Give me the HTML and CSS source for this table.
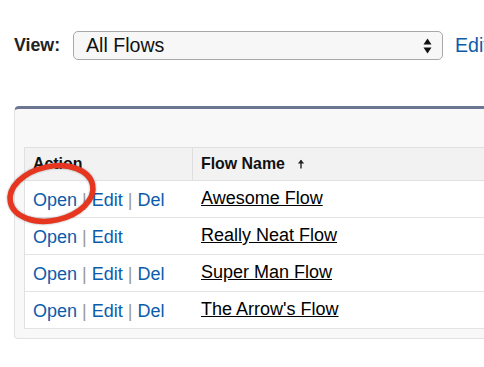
FILE: index.html
```html
<!DOCTYPE html>
<html>
<head>
<meta charset="utf-8">
<link rel="stylesheet" href="styles.css">
</head>
<body>
<div class="viewbar">
  <span class="view-label">View:</span>
  <div class="select">
    <span class="select-text">All Flows</span>
    <svg class="select-arrows" width="9" height="16" viewBox="0 0 9 16"><path d="M4.5 0.5 L8.5 6.5 L0.5 6.5 Z" fill="#111"/><path d="M0.5 9.5 L8.5 9.5 L4.5 15.5 Z" fill="#111"/></svg>
  </div>
  <a class="edit-view">Edit</a>
</div>

<div class="panel">
  <div class="list">
    <div class="row head">
      <div class="cell action-h">Action</div>
      <div class="cell name-h">Flow Name
        <svg class="sort" width="8" height="10" viewBox="0 0 8 10"><path d="M4 1.2 L4 9.5" stroke="#222" stroke-width="1.4"/><path d="M0.8 4.6 L4 0.8 L7.2 4.6 Z" fill="#222"/></svg>
      </div>
    </div>
    <div class="row">
      <div class="cell actions"><a>Open</a> <span class="sep">|</span> <a>Edit</a> <span class="sep">|</span> <a>Del</a></div>
      <div class="cell name"><a>Awesome Flow</a></div>
    </div>
    <div class="row">
      <div class="cell actions"><a>Open</a> <span class="sep">|</span> <a>Edit</a></div>
      <div class="cell name"><a>Really Neat Flow</a></div>
    </div>
    <div class="row">
      <div class="cell actions"><a>Open</a> <span class="sep">|</span> <a>Edit</a> <span class="sep">|</span> <a>Del</a></div>
      <div class="cell name"><a>Super Man Flow</a></div>
    </div>
    <div class="row">
      <div class="cell actions"><a>Open</a> <span class="sep">|</span> <a>Edit</a> <span class="sep">|</span> <a>Del</a></div>
      <div class="cell name"><a>The Arrow's Flow</a></div>
    </div>
  </div>
</div>

<svg class="highlight" width="110" height="90" viewBox="0 0 110 90">
  <ellipse cx="51.5" cy="43.5" rx="42" ry="27" transform="rotate(-12 51.5 43.5)" fill="none" stroke="#e6361f" stroke-width="5.5"/>
</svg>
</body>
</html>
```

FILE: styles.css
```css
html, body {
  margin: 0;
  padding: 0;
  background: #ffffff;
  overflow: hidden;
}
body {
  font-family: "Liberation Sans", Arial, Helvetica, sans-serif;
  color: #000;
  width: 484px;
  height: 367px;
  position: relative;
}
.viewbar {
  display: flex;
  align-items: center;
  margin-top: 31px;
  padding-left: 14px;
  height: 29px;
  white-space: nowrap;
}
.view-label {
  font-weight: bold;
  font-size: 17.8px;
  color: #222;
  width: 59px;
  flex: none;
}
.select {
  box-sizing: border-box;
  width: 370px;
  height: 29px;
  flex: none;
  border: 1px solid #a8a8a8;
  border-radius: 5px;
  background: #f7f7f7;
  display: flex;
  align-items: center;
  padding-left: 12px;
  padding-right: 10px;
}
.select-text {
  font-size: 19.6px;
  flex: 1;
  color: #111;
}
.select-arrows {
  display: block;
}
.edit-view {
  margin-left: 12px;
  font-size: 19.6px;
  color: #0b5cab;
  flex: none;
}
.panel {
  margin-top: 46px;
  margin-left: 14px;
  width: 540px;
  box-sizing: border-box;
  border: 1px solid #e2e2e2;
  border-top: 3px solid #6c7692;
  border-radius: 5px 5px 4px 4px;
  background: #f8f8f8;
  padding: 38px 0 9px 9px;
}
.list {
  border-top: 1px solid #e0e0e0;
  border-left: 1px solid #e0e0e0;
  background: #fff;
}
.row {
  display: grid;
  grid-template-columns: 168px 1fr;
  box-sizing: border-box;
  height: 37px;
  border-bottom: 1px solid #e3e3e3;
}
.row.head {
  height: 33px;
  background: #f2f2f2;
  border-bottom: 1px solid #e0e0e0;
}
.cell {
  display: flex;
  align-items: center;
  padding-left: 8px;
  white-space: nowrap;
}
.action-h, .name-h {
  font-weight: bold;
  font-size: 15.9px;
  color: #111;
}
.action-h {
  border-right: 1px solid #dedede;
}
.sort {
  margin-left: 12px;
}
.actions {
  font-size: 18px;
  padding-top: 3px;
}
.actions a {
  color: #0b5cab;
}
.actions .sep {
  color: #999;
  margin: 0 5px;
}
.name {
  font-size: 18px;
  padding-bottom: 1px;
}
.name a {
  color: #000;
  text-decoration: underline;
  text-underline-offset: 1px;
}
.highlight {
  position: absolute;
  left: 0;
  top: 150px;
  filter: drop-shadow(0 0.5px 0.8px rgba(0,0,0,0.35));
}
```
